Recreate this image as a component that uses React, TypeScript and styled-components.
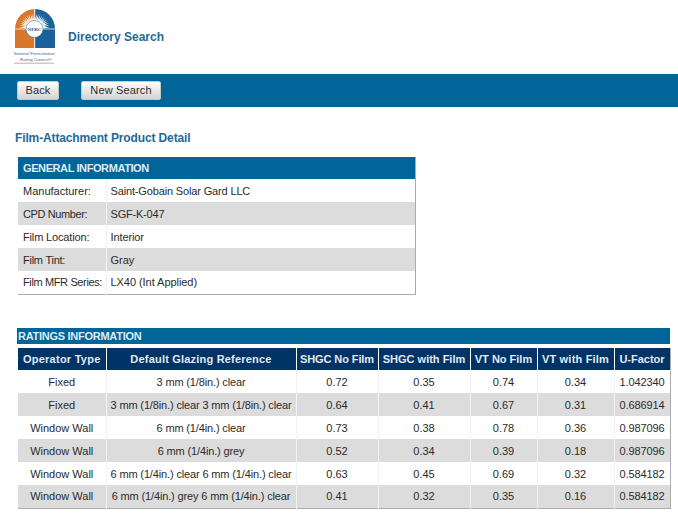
import React from "react";
import styled, { createGlobalStyle } from "styled-components";

const GlobalStyle = createGlobalStyle`
  html, body {
    margin: 0;
    padding: 0;
    background: #fff;
    font-family: "Liberation Sans", Arial, sans-serif;
    font-size: 11px;
    color: #2b2b2b;
  }
`;

const Page = styled.div`
  width: 678px;
  height: 518px;
  overflow: hidden;
`;

const Header = styled.header`
  height: 74px;
  display: flex;
  align-items: flex-start;
  padding-left: 14px;
  box-sizing: border-box;
`;

const LogoWrap = styled.div`
  width: 42px;
  height: 56px;
  margin-top: 9px;
  flex: none;
`;

const SiteTitle = styled.h1`
  margin: 29px 0 0 12px;
  font-size: 12px;
  line-height: 16px;
  font-weight: bold;
  color: #1f6a97;
`;

const Toolbar = styled.nav`
  height: 33px;
  background: #006699;
  display: flex;
  align-items: center;
  padding-left: 17px;
  gap: 22px;
  box-sizing: border-box;
`;

const ToolButton = styled.button<{ $width: number }>`
  width: ${(p) => p.$width}px;
  height: 19px;
  padding: 0 0 2px;
  border: 1px solid #c9c9c9;
  border-radius: 2px;
  background: linear-gradient(#ffffff, #e6e6e6 55%, #d4d4d4);
  font-family: inherit;
  font-size: 11px;
  letter-spacing: 0.15px;
  color: #2b2b2b;
`;

const Content = styled.main`
  padding: 23px 0 0 15px;
`;

const PageHeading = styled.h2`
  margin: 0;
  font-size: 12px;
  line-height: 16px;
  font-weight: bold;
  letter-spacing: -0.13px;
  color: #1f6a97;
`;

const GeneralTable = styled.table`
  width: 398px;
  margin: 11px 0 0 3px;
  border-collapse: collapse;
  table-layout: fixed;
  border-right: 1px solid #aaa;
  border-bottom: 1px solid #aaa;
`;

const GeneralHead = styled.th`
  height: 22px;
  padding: 0 0 0 5px;
  background: #006699;
  color: #dfeaf1;
  font-size: 11px;
  font-weight: bold;
  letter-spacing: -0.4px;
  text-align: left;
`;

const Row = styled.tr<{ $shaded: boolean }>`
  background: ${(p) => (p.$shaded ? "#dcdcdc" : "#ffffff")};
`;

const GeneralCell = styled.td<{ $tracking: number }>`
  height: 23px;
  padding: 0 0 0 5px;
  box-sizing: border-box;
  font-size: 11px;
  letter-spacing: ${(p) => p.$tracking}px;
  white-space: nowrap;
  & + & {
    border-left: 1px solid #f2f2f2;
    padding-left: 4px;
  }
`;

const RatingsBar = styled.div`
  width: 653px;
  height: 16px;
  margin: 33px 0 0 2px;
  padding-left: 1px;
  box-sizing: border-box;
  background: #006699;
  color: #dfeaf1;
  font-size: 11px;
  line-height: 16px;
  font-weight: bold;
  letter-spacing: -0.27px;
`;

const RatingsTable = styled.table`
  width: 652px;
  margin: 4px 0 0 3px;
  border-collapse: collapse;
  table-layout: fixed;
  border-right: 1px solid #aaa;
  border-bottom: 1px solid #aaa;
`;

const RatingsHead = styled.th<{ $tracking: number }>`
  height: 22px;
  padding: 0;
  background: #003366;
  border-bottom: 1px solid #fff;
  color: #e3eaf1;
  font-size: 11px;
  font-weight: bold;
  letter-spacing: ${(p) => p.$tracking}px;
  text-align: center;
  white-space: nowrap;
  & + & {
    border-left: 1px solid #fff;
  }
`;

const RatingsCell = styled.td<{ $tracking: number }>`
  height: 23px;
  padding: 0;
  box-sizing: border-box;
  font-size: 11px;
  letter-spacing: ${(p) => p.$tracking}px;
  text-align: center;
  white-space: nowrap;
  & + & {
    border-left: 1px solid #f2f2f2;
  }
`;

const Logo = () => {
  const rays = Array.from({ length: 25 }, (_, i) => -90 + i * 7.5).filter((a) => a % 90 !== 0);
  return (
    <svg width="42" height="56" viewBox="0 0 42 56">
      <path d="M1 39V20a20 20 0 0 1 19.500-20v39z" fill="#d9782a" />
      <path d="M21 0a20 20 0 0 1 20 20v19h-20z" fill="#1a6299" />
      {rays.map((a) => (
        <path
          key={a}
          d="M20.500 4.500l1.100 8h-2.200z"
          transform={`rotate(${a} 20.500 20)`}
          fill={a < 0 ? "#fdf0df" : "#f2f7fb"}
        />
      ))}
      <path d="M1 20h40M20.750 0v39" stroke="#fff" strokeWidth="0.7" />
      <circle cx="20.500" cy="20" r="8.500" fill="#fff" stroke="#1a6299" strokeWidth="0.5" />
      <text x="20.500" y="22" textAnchor="middle" fontSize="5" fontWeight="bold" fontFamily="Liberation Serif" fill="#1a4f80">
        NFRC
      </text>
      <text x="20" y="46" textAnchor="middle" fontSize="4.400" fontFamily="Liberation Sans" fill="#3f6a8f">
        National Fenestration
      </text>
      <text x="22" y="51.500" textAnchor="middle" fontSize="4.400" fontFamily="Liberation Sans" fill="#3f6a8f">
        Rating Council®
      </text>
      <rect x="0" y="53.500" width="40" height="1.500" fill="#e0c8a8" />
    </svg>
  );
};

const generalRows: { label: string; value: string; labelTrack: number; valueTrack: number }[] = [
  { label: "Manufacturer:", value: "Saint-Gobain Solar Gard LLC", labelTrack: 0, valueTrack: -0.15 },
  { label: "CPD Number:", value: "SGF-K-047", labelTrack: -0.4, valueTrack: -0.2 },
  { label: "Film Location:", value: "Interior", labelTrack: -0.15, valueTrack: -0.1 },
  { label: "Film Tint:", value: "Gray", labelTrack: -0.25, valueTrack: 0 },
  { label: "Film MFR Series:", value: "LX40 (Int Applied)", labelTrack: -0.37, valueTrack: -0.05 },
];

const ratingColumns: { name: string; width: number; headTrack: number; cellTrack: number }[] = [
  { name: "Operator Type", width: 88, headTrack: 0.25, cellTrack: 0 },
  { name: "Default Glazing Reference", width: 190, headTrack: 0.2, cellTrack: -0.14 },
  { name: "SHGC No Film", width: 82, headTrack: -0.1, cellTrack: 0 },
  { name: "SHGC with Film", width: 92, headTrack: 0, cellTrack: 0 },
  { name: "VT No Film", width: 67, headTrack: 0, cellTrack: 0 },
  { name: "VT with Film", width: 77, headTrack: 0.2, cellTrack: 0 },
  { name: "U-Factor", width: 56, headTrack: 0, cellTrack: -0.1 },
];

const ratingRows = [
  ["Fixed", "3 mm (1/8in.) clear", "0.72", "0.35", "0.74", "0.34", "1.042340"],
  ["Fixed", "3 mm (1/8in.) clear 3 mm (1/8in.) clear", "0.64", "0.41", "0.67", "0.31", "0.686914"],
  ["Window Wall", "6 mm (1/4in.) clear", "0.73", "0.38", "0.78", "0.36", "0.987096"],
  ["Window Wall", "6 mm (1/4in.) grey", "0.52", "0.34", "0.39", "0.18", "0.987096"],
  ["Window Wall", "6 mm (1/4in.) clear 6 mm (1/4in.) clear", "0.63", "0.45", "0.69", "0.32", "0.584182"],
  ["Window Wall", "6 mm (1/4in.) grey 6 mm (1/4in.) clear", "0.41", "0.32", "0.35", "0.16", "0.584182"],
];

const App: React.FC = () => {
  return (
    <Page>
      <GlobalStyle />
      <Header>
        <LogoWrap>
          <Logo />
        </LogoWrap>
        <SiteTitle>Directory Search</SiteTitle>
      </Header>
      <Toolbar>
        <ToolButton $width={42}>Back</ToolButton>
        <ToolButton $width={80}>New Search</ToolButton>
      </Toolbar>
      <Content>
        <PageHeading>Film-Attachment Product Detail</PageHeading>
        <GeneralTable>
          <colgroup>
            <col style={{ width: 88 }} />
            <col />
          </colgroup>
          <thead>
            <tr>
              <GeneralHead colSpan={2}>GENERAL INFORMATION</GeneralHead>
            </tr>
          </thead>
          <tbody>
            {generalRows.map((row, index) => (
              <Row key={row.label} $shaded={index % 2 === 1}>
                <GeneralCell $tracking={row.labelTrack}>{row.label}</GeneralCell>
                <GeneralCell $tracking={row.valueTrack}>{row.value}</GeneralCell>
              </Row>
            ))}
          </tbody>
        </GeneralTable>
        <RatingsBar>RATINGS INFORMATION</RatingsBar>
        <RatingsTable>
          <colgroup>
            {ratingColumns.map((column) => (
              <col key={column.name} style={{ width: column.width }} />
            ))}
          </colgroup>
          <thead>
            <tr>
              {ratingColumns.map((column) => (
                <RatingsHead key={column.name} $tracking={column.headTrack}>
                  {column.name}
                </RatingsHead>
              ))}
            </tr>
          </thead>
          <tbody>
            {ratingRows.map((row, index) => (
              <Row key={index} $shaded={index % 2 === 1}>
                {row.map((value, cell) => (
                  <RatingsCell key={cell} $tracking={ratingColumns[cell].cellTrack}>
                    {value}
                  </RatingsCell>
                ))}
              </Row>
            ))}
          </tbody>
        </RatingsTable>
      </Content>
    </Page>
  );
};

export default App;
